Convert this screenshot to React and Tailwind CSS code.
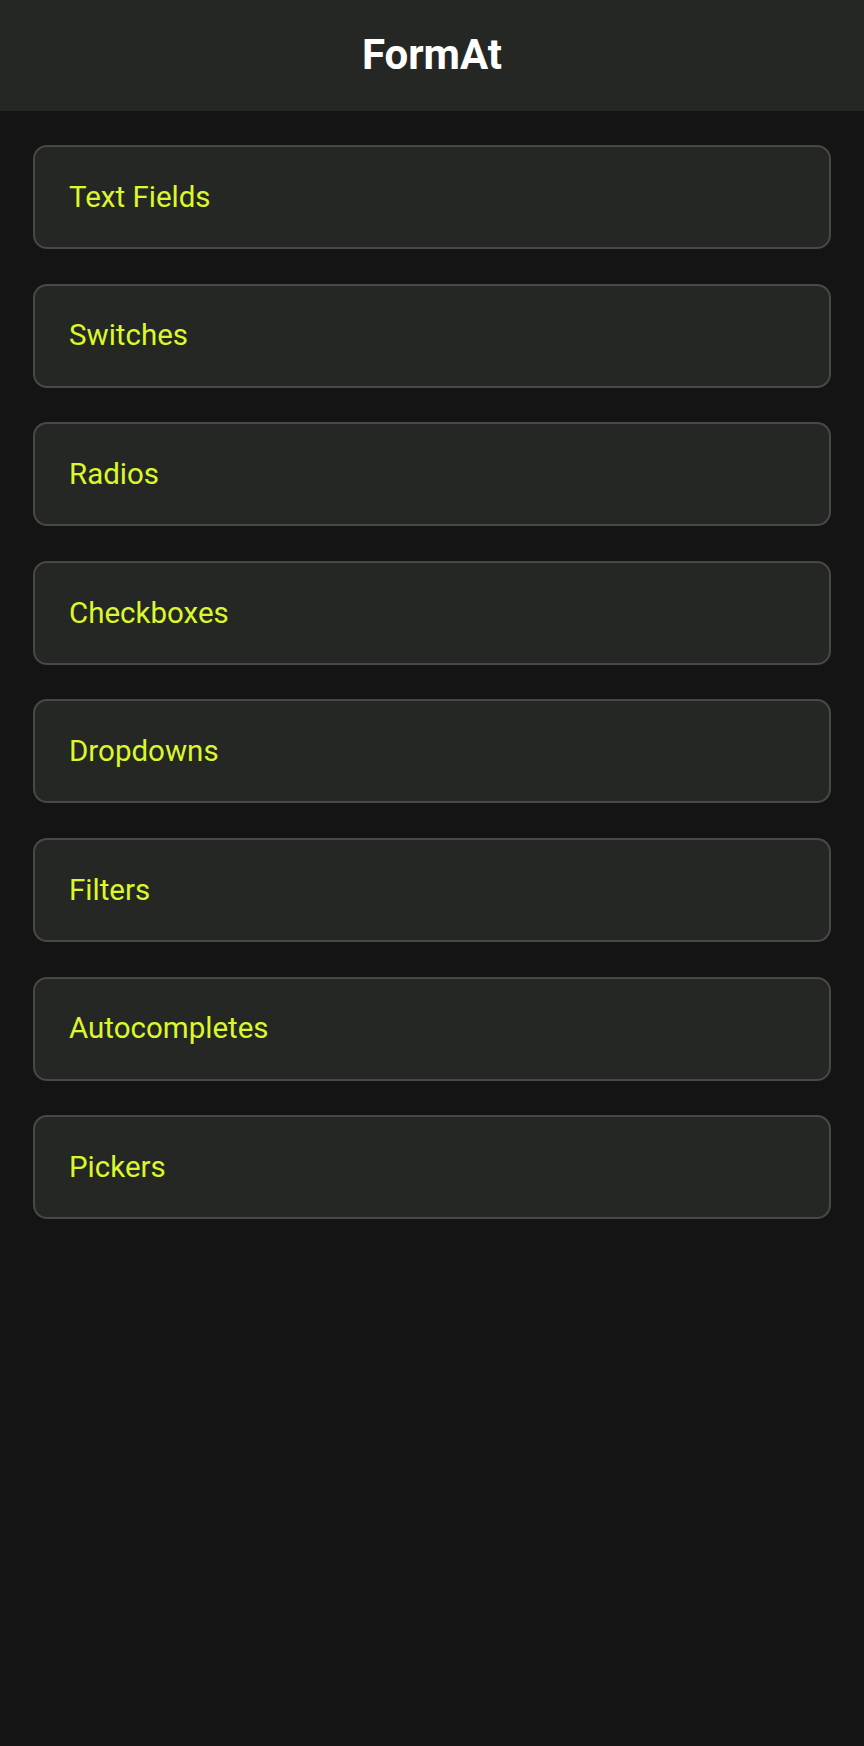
const items = ['Text Fields', 'Switches', 'Radios', 'Checkboxes', 'Dropdowns', 'Filters', 'Autocompletes', 'Pickers'];

export default function App() {
  return (
    <div className="min-h-[1746px] bg-[#141414] font-['Roboto',sans-serif]">
      <header className="h-[111px] bg-[#252725] flex items-center justify-center">
        <h1 className="text-[42px] font-bold text-white -mt-[2px]">FormAt</h1>
      </header>
      <div className="flex flex-col gap-[34.6px] px-[33px] pt-[34px]">
        {items.map((it) => (
          <button
            key={it}
            className="h-[104px] rounded-[14px] border-2 border-[#474946] bg-[#252725] text-left pl-[34px] text-[29.5px] text-[#dcf72b]"
          >
            {it}
          </button>
        ))}
      </div>
    </div>
  );
}
